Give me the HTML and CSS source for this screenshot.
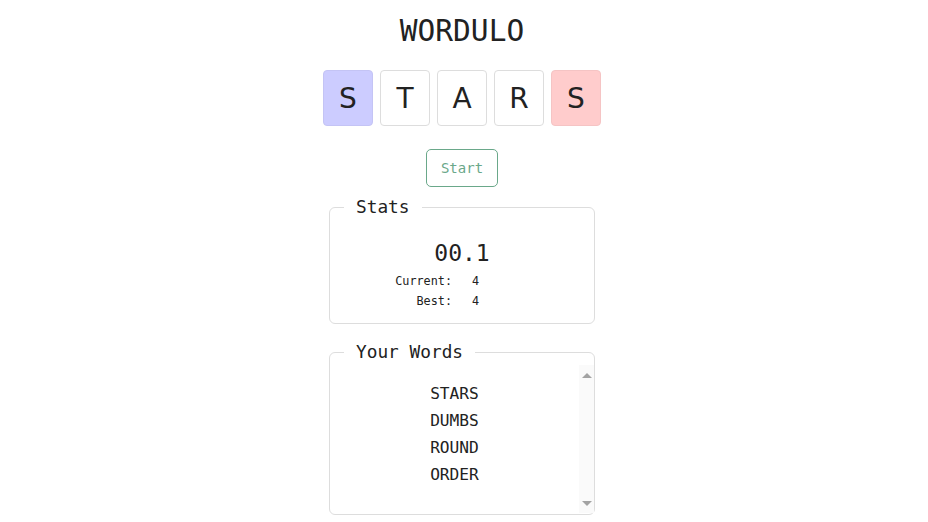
FILE: index.html
```html
<!DOCTYPE html>
<html lang="en">
<head>
<meta charset="utf-8">
<title>Wordulo</title>
<link rel="stylesheet" href="styles.css">
</head>
<body>
<main class="app">
  <h1 class="title">WORDULO</h1>
  <div class="tiles">
    <div class="tile tile-blue">S</div>
    <div class="tile">T</div>
    <div class="tile">A</div>
    <div class="tile">R</div>
    <div class="tile tile-red">S</div>
  </div>
  <button class="start" type="button">Start</button>
  <fieldset class="panel stats">
    <legend class="legend">Stats</legend>
    <div class="timer">00.1</div>
    <div class="score">
      <span class="label">Current:</span><span class="value">4</span>
      <span class="label">Best:</span><span class="value">4</span>
    </div>
  </fieldset>
  <fieldset class="panel words">
    <legend class="legend">Your Words</legend>
    <div class="word-box">
      <div class="word-list">
        <div class="word">STARS</div>
        <div class="word">DUMBS</div>
        <div class="word">ROUND</div>
        <div class="word">ORDER</div>
      </div>
      <div class="scrollbar" aria-hidden="true">
        <span class="arrow arrow-up"></span>
        <span class="arrow arrow-down"></span>
      </div>
    </div>
  </fieldset>
</main>
</body>
</html>
```
FILE: styles.css
```css
* { box-sizing: border-box; }
html, body { margin: 0; padding: 0; background: #fff; }
body {
  font-family: "DejaVu Sans Mono", "Liberation Mono", monospace;
  color: #222;
}
.app {
  display: flex;
  flex-direction: column;
  align-items: center;
  padding-top: 14px;
  padding-right: 4px;
}
.title {
  margin: 0;
  font-size: 29.5px;
  line-height: 34px;
  font-weight: normal;
  color: #222;
}
.tiles {
  display: flex;
  gap: 7px;
  margin-top: 22px;
}
.tile {
  width: 50px;
  height: 56px;
  border: 1px solid #ddd;
  border-radius: 4px;
  display: flex;
  align-items: center;
  justify-content: center;
  font-family: "DejaVu Sans", "Liberation Sans", sans-serif;
  font-size: 28px;
  color: #222;
  background: #fff;
}
.tile-blue { background: #ccccff; border-color: #c4c4f5; }
.tile-red { background: #ffcccc; border-color: #f5c4c4; }
.start {
  margin-top: 23px;
  width: 72px;
  height: 38px;
  border: 1px solid #6aa88a;
  border-radius: 5px;
  background: #fff;
  color: #6aa88a;
  font-family: "DejaVu Sans Mono", monospace;
  font-size: 14px;
  padding: 0;
}
.panel {
  width: 266px;
  margin: 0;
  padding: 0;
  border: 1px solid #ddd;
  border-radius: 6px;
}
.legend {
  margin-left: 14px;
  padding: 0 12px;
  font-size: 17.8px;
  line-height: 20px;
  color: #222;
  text-align: left;
}
.stats {
  margin-top: 10px;
  padding: 22px 0 12px;
}
.timer {
  font-size: 23px;
  line-height: 28px;
  margin-bottom: 4px;
  text-align: center;
}
.score {
  display: grid;
  grid-template-columns: 1fr 1fr;
  column-gap: 20px;
  font-size: 11.8px;
  line-height: 20px;
}
.label { text-align: right; }
.value { text-align: left; }
.words {
  margin-top: 18px;
  padding: 0 0 1px;
}
.word-box {
  display: flex;
  margin-top: 3px;
  height: 148px;
}
.word-list {
  flex: 1;
  padding-top: 15px;
  text-align: center;
}
.word {
  font-size: 16.2px;
  line-height: 27px;
}
.scrollbar {
  width: 15px;
  background: #fafafa;
  display: flex;
  flex-direction: column;
  justify-content: space-between;
  align-items: center;
  padding: 8px 0 7px;
}
.arrow {
  width: 0;
  height: 0;
  border-left: 5px solid transparent;
  border-right: 5px solid transparent;
}
.arrow-up { border-bottom: 5px solid #a3a3a3; }
.arrow-down { border-top: 5px solid #a3a3a3; }
```
